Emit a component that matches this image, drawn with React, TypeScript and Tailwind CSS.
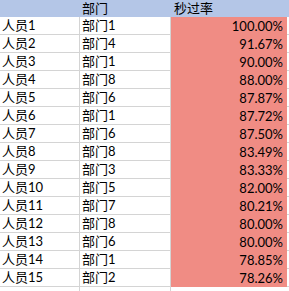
const rows: [string, string, string][] = [
  ['人员1', '部门1', '100.00%'],
  ['人员2', '部门4', '91.67%'],
  ['人员3', '部门1', '90.00%'],
  ['人员4', '部门8', '88.00%'],
  ['人员5', '部门6', '87.87%'],
  ['人员6', '部门1', '87.72%'],
  ['人员7', '部门6', '87.50%'],
  ['人员8', '部门8', '83.49%'],
  ['人员9', '部门3', '83.33%'],
  ['人员10', '部门5', '82.00%'],
  ['人员11', '部门7', '80.21%'],
  ['人员12', '部门8', '80.00%'],
  ['人员13', '部门6', '80.00%'],
  ['人员14', '部门1', '78.85%'],
  ['人员15', '部门2', '78.26%'],
];

const font = { fontFamily: 'Lato, "Noto Sans CJK SC", sans-serif' };

export default function App() {
  return (
    <div className="w-[289px] h-[291px] overflow-hidden bg-white text-[13px] text-black leading-none" style={font}>
      <div className="flex h-[17px] bg-[#b4c6e7] items-center">
        <div className="w-[80px]" />
        <div className="w-[91px] pl-[2px]">部门</div>
        <div className="flex-1 pl-[3px]">秒过率</div>
      </div>
      {rows.map(([name, dept, rate]) => (
        <div key={name} className="flex h-[18px]">
          <div className="w-[80px] flex items-center pl-[2px] border-r border-b border-[#d4d4d4]">{name}</div>
          <div className="w-[91px] flex items-center pl-[2px] border-r border-b border-[#d4d4d4]">{dept}</div>
          <div className="w-[116px] flex items-center justify-end pr-[4px] bg-[#f08c84]">{rate}</div>
          <div className="flex-1 border-b border-[#d4d4d4]" />
        </div>
      ))}
      <div className="flex h-[18px]">
        <div className="w-[80px] border-r border-[#d4d4d4]" />
        <div className="w-[91px] border-r border-[#d4d4d4]" />
      </div>
    </div>
  );
}
